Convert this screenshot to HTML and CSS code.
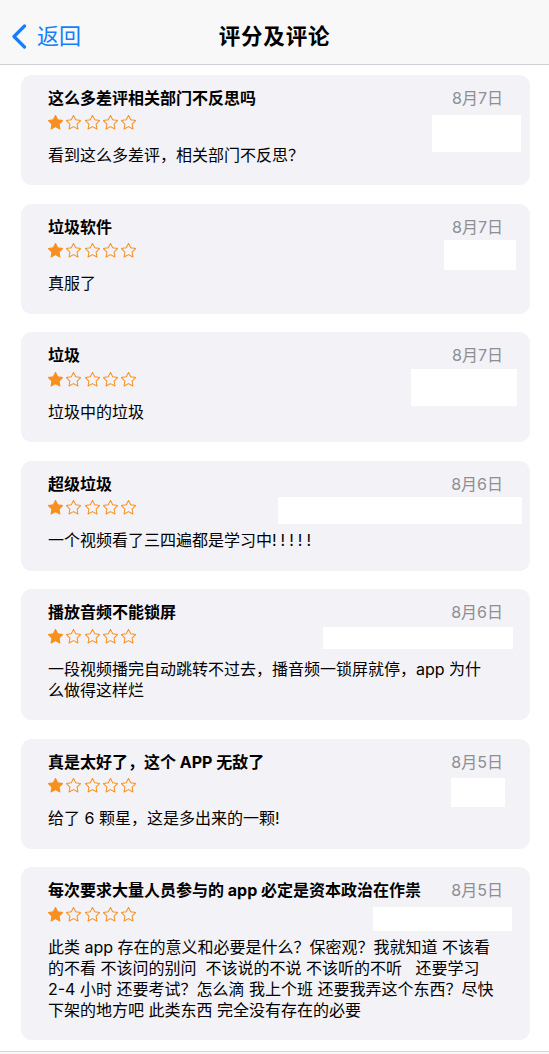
FILE: index.html
```html
<!DOCTYPE html>
<html lang="zh-CN">
<head>
<meta charset="utf-8">
<title>评分及评论</title>
<link rel="stylesheet" href="styles.css">
</head>
<body>
<header class="nav">
  <a class="back" href="#">
    <svg class="chev" width="16" height="25" viewBox="0 0 16 25"><path d="M13.5 2 L3 12.5 L13.5 23" fill="none" stroke="#147efb" stroke-width="3.2" stroke-linecap="round" stroke-linejoin="round"/></svg>
    <span>返回</span>
  </a>
  <h1 class="nav-title">评分及评论</h1>
  <span class="nav-spacer"></span>
</header>

<main class="list">
  <section class="card">
    <div class="head"><h2 class="title">这么多差评相关部门不反思吗</h2><span class="date">8月7日</span></div>
    <div class="stars"><svg class="star on" viewBox="1.6 1.3 20.8 20.8"><path d="M12 1.8l3.05 6.2 6.85 1-4.95 4.83 1.17 6.82L12 17.43l-6.12 3.22 1.17-6.82L2.1 9l6.85-1z"/></svg><svg class="star" viewBox="1.6 1.3 20.8 20.8"><path d="M12 1.8l3.05 6.2 6.85 1-4.95 4.83 1.17 6.82L12 17.43l-6.12 3.22 1.17-6.82L2.1 9l6.85-1z"/></svg><svg class="star" viewBox="1.6 1.3 20.8 20.8"><path d="M12 1.8l3.05 6.2 6.85 1-4.95 4.83 1.17 6.82L12 17.43l-6.12 3.22 1.17-6.82L2.1 9l6.85-1z"/></svg><svg class="star" viewBox="1.6 1.3 20.8 20.8"><path d="M12 1.8l3.05 6.2 6.85 1-4.95 4.83 1.17 6.82L12 17.43l-6.12 3.22 1.17-6.82L2.1 9l6.85-1z"/></svg><svg class="star" viewBox="1.6 1.3 20.8 20.8"><path d="M12 1.8l3.05 6.2 6.85 1-4.95 4.83 1.17 6.82L12 17.43l-6.12 3.22 1.17-6.82L2.1 9l6.85-1z"/></svg></div>
    <p class="body">看到这么多差评，相关部门不反思？</p>
    <span class="mask m1"></span>
  </section>

  <section class="card">
    <div class="head"><h2 class="title">垃圾软件</h2><span class="date">8月7日</span></div>
    <div class="stars"><svg class="star on" viewBox="1.6 1.3 20.8 20.8"><path d="M12 1.8l3.05 6.2 6.85 1-4.95 4.83 1.17 6.82L12 17.43l-6.12 3.22 1.17-6.82L2.1 9l6.85-1z"/></svg><svg class="star" viewBox="1.6 1.3 20.8 20.8"><path d="M12 1.8l3.05 6.2 6.85 1-4.95 4.83 1.17 6.82L12 17.43l-6.12 3.22 1.17-6.82L2.1 9l6.85-1z"/></svg><svg class="star" viewBox="1.6 1.3 20.8 20.8"><path d="M12 1.8l3.05 6.2 6.85 1-4.95 4.83 1.17 6.82L12 17.43l-6.12 3.22 1.17-6.82L2.1 9l6.85-1z"/></svg><svg class="star" viewBox="1.6 1.3 20.8 20.8"><path d="M12 1.8l3.05 6.2 6.85 1-4.95 4.83 1.17 6.82L12 17.43l-6.12 3.22 1.17-6.82L2.1 9l6.85-1z"/></svg><svg class="star" viewBox="1.6 1.3 20.8 20.8"><path d="M12 1.8l3.05 6.2 6.85 1-4.95 4.83 1.17 6.82L12 17.43l-6.12 3.22 1.17-6.82L2.1 9l6.85-1z"/></svg></div>
    <p class="body">真服了</p>
    <span class="mask m2"></span>
  </section>

  <section class="card">
    <div class="head"><h2 class="title">垃圾</h2><span class="date">8月7日</span></div>
    <div class="stars"><svg class="star on" viewBox="1.6 1.3 20.8 20.8"><path d="M12 1.8l3.05 6.2 6.85 1-4.95 4.83 1.17 6.82L12 17.43l-6.12 3.22 1.17-6.82L2.1 9l6.85-1z"/></svg><svg class="star" viewBox="1.6 1.3 20.8 20.8"><path d="M12 1.8l3.05 6.2 6.85 1-4.95 4.83 1.17 6.82L12 17.43l-6.12 3.22 1.17-6.82L2.1 9l6.85-1z"/></svg><svg class="star" viewBox="1.6 1.3 20.8 20.8"><path d="M12 1.8l3.05 6.2 6.85 1-4.95 4.83 1.17 6.82L12 17.43l-6.12 3.22 1.17-6.82L2.1 9l6.85-1z"/></svg><svg class="star" viewBox="1.6 1.3 20.8 20.8"><path d="M12 1.8l3.05 6.2 6.85 1-4.95 4.83 1.17 6.82L12 17.43l-6.12 3.22 1.17-6.82L2.1 9l6.85-1z"/></svg><svg class="star" viewBox="1.6 1.3 20.8 20.8"><path d="M12 1.8l3.05 6.2 6.85 1-4.95 4.83 1.17 6.82L12 17.43l-6.12 3.22 1.17-6.82L2.1 9l6.85-1z"/></svg></div>
    <p class="body">垃圾中的垃圾</p>
    <span class="mask m3"></span>
  </section>

  <section class="card">
    <div class="head"><h2 class="title">超级垃圾</h2><span class="date">8月6日</span></div>
    <div class="stars"><svg class="star on" viewBox="1.6 1.3 20.8 20.8"><path d="M12 1.8l3.05 6.2 6.85 1-4.95 4.83 1.17 6.82L12 17.43l-6.12 3.22 1.17-6.82L2.1 9l6.85-1z"/></svg><svg class="star" viewBox="1.6 1.3 20.8 20.8"><path d="M12 1.8l3.05 6.2 6.85 1-4.95 4.83 1.17 6.82L12 17.43l-6.12 3.22 1.17-6.82L2.1 9l6.85-1z"/></svg><svg class="star" viewBox="1.6 1.3 20.8 20.8"><path d="M12 1.8l3.05 6.2 6.85 1-4.95 4.83 1.17 6.82L12 17.43l-6.12 3.22 1.17-6.82L2.1 9l6.85-1z"/></svg><svg class="star" viewBox="1.6 1.3 20.8 20.8"><path d="M12 1.8l3.05 6.2 6.85 1-4.95 4.83 1.17 6.82L12 17.43l-6.12 3.22 1.17-6.82L2.1 9l6.85-1z"/></svg><svg class="star" viewBox="1.6 1.3 20.8 20.8"><path d="M12 1.8l3.05 6.2 6.85 1-4.95 4.83 1.17 6.82L12 17.43l-6.12 3.22 1.17-6.82L2.1 9l6.85-1z"/></svg></div>
    <p class="body">一个视频看了三四遍都是学习中<span class="bang">!!!!!</span></p>
    <span class="mask m4"></span>
  </section>

  <section class="card">
    <div class="head"><h2 class="title">播放音频不能锁屏</h2><span class="date">8月6日</span></div>
    <div class="stars"><svg class="star on" viewBox="1.6 1.3 20.8 20.8"><path d="M12 1.8l3.05 6.2 6.85 1-4.95 4.83 1.17 6.82L12 17.43l-6.12 3.22 1.17-6.82L2.1 9l6.85-1z"/></svg><svg class="star" viewBox="1.6 1.3 20.8 20.8"><path d="M12 1.8l3.05 6.2 6.85 1-4.95 4.83 1.17 6.82L12 17.43l-6.12 3.22 1.17-6.82L2.1 9l6.85-1z"/></svg><svg class="star" viewBox="1.6 1.3 20.8 20.8"><path d="M12 1.8l3.05 6.2 6.85 1-4.95 4.83 1.17 6.82L12 17.43l-6.12 3.22 1.17-6.82L2.1 9l6.85-1z"/></svg><svg class="star" viewBox="1.6 1.3 20.8 20.8"><path d="M12 1.8l3.05 6.2 6.85 1-4.95 4.83 1.17 6.82L12 17.43l-6.12 3.22 1.17-6.82L2.1 9l6.85-1z"/></svg><svg class="star" viewBox="1.6 1.3 20.8 20.8"><path d="M12 1.8l3.05 6.2 6.85 1-4.95 4.83 1.17 6.82L12 17.43l-6.12 3.22 1.17-6.82L2.1 9l6.85-1z"/></svg></div>
    <p class="body">一段视频播完自动跳转不过去，播音频一锁屏就停，app 为什<br>么做得这样烂</p>
    <span class="mask m5"></span>
  </section>

  <section class="card">
    <div class="head"><h2 class="title">真是太好了，这个 APP 无敌了</h2><span class="date">8月5日</span></div>
    <div class="stars"><svg class="star on" viewBox="1.6 1.3 20.8 20.8"><path d="M12 1.8l3.05 6.2 6.85 1-4.95 4.83 1.17 6.82L12 17.43l-6.12 3.22 1.17-6.82L2.1 9l6.85-1z"/></svg><svg class="star" viewBox="1.6 1.3 20.8 20.8"><path d="M12 1.8l3.05 6.2 6.85 1-4.95 4.83 1.17 6.82L12 17.43l-6.12 3.22 1.17-6.82L2.1 9l6.85-1z"/></svg><svg class="star" viewBox="1.6 1.3 20.8 20.8"><path d="M12 1.8l3.05 6.2 6.85 1-4.95 4.83 1.17 6.82L12 17.43l-6.12 3.22 1.17-6.82L2.1 9l6.85-1z"/></svg><svg class="star" viewBox="1.6 1.3 20.8 20.8"><path d="M12 1.8l3.05 6.2 6.85 1-4.95 4.83 1.17 6.82L12 17.43l-6.12 3.22 1.17-6.82L2.1 9l6.85-1z"/></svg><svg class="star" viewBox="1.6 1.3 20.8 20.8"><path d="M12 1.8l3.05 6.2 6.85 1-4.95 4.83 1.17 6.82L12 17.43l-6.12 3.22 1.17-6.82L2.1 9l6.85-1z"/></svg></div>
    <p class="body">给了 6 颗星，这是多出来的一颗!</p>
    <span class="mask m6"></span>
  </section>

  <section class="card">
    <div class="head"><h2 class="title">每次要求大量人员参与的 app 必定是资本政治在作祟</h2><span class="date">8月5日</span></div>
    <div class="stars"><svg class="star on" viewBox="1.6 1.3 20.8 20.8"><path d="M12 1.8l3.05 6.2 6.85 1-4.95 4.83 1.17 6.82L12 17.43l-6.12 3.22 1.17-6.82L2.1 9l6.85-1z"/></svg><svg class="star" viewBox="1.6 1.3 20.8 20.8"><path d="M12 1.8l3.05 6.2 6.85 1-4.95 4.83 1.17 6.82L12 17.43l-6.12 3.22 1.17-6.82L2.1 9l6.85-1z"/></svg><svg class="star" viewBox="1.6 1.3 20.8 20.8"><path d="M12 1.8l3.05 6.2 6.85 1-4.95 4.83 1.17 6.82L12 17.43l-6.12 3.22 1.17-6.82L2.1 9l6.85-1z"/></svg><svg class="star" viewBox="1.6 1.3 20.8 20.8"><path d="M12 1.8l3.05 6.2 6.85 1-4.95 4.83 1.17 6.82L12 17.43l-6.12 3.22 1.17-6.82L2.1 9l6.85-1z"/></svg><svg class="star" viewBox="1.6 1.3 20.8 20.8"><path d="M12 1.8l3.05 6.2 6.85 1-4.95 4.83 1.17 6.82L12 17.43l-6.12 3.22 1.17-6.82L2.1 9l6.85-1z"/></svg></div>
    <p class="body pre">此类 app 存在的意义和必要是什么？保密观？我就知道 不该看<br>的不看 不该问的别问  不该说的不说 不该听的不听   还要学习<br>2-4 小时 还要考试？怎么滴 我上个班 还要我弄这个东西？尽快<br>下架的地方吧 此类东西 完全没有存在的必要</p>
    <span class="mask m7"></span>
  </section>
</main>

<footer class="tabbar"></footer>
</body>
</html>
```

FILE: styles.css
```css
* { box-sizing: border-box; }

html, body {
  margin: 0;
  padding: 0;
  background: #ffffff;
}

body {
  font-family: "Inter", "Noto Sans CJK SC", sans-serif;
  color: #000;
  width: 549px;
  height: 1054px;
  overflow: hidden;
}

.nav {
  height: 65px;
  padding-top: 8px;
  background: #f8f8f9;
  border-bottom: 1px solid #cfcfd3;
  display: grid;
  grid-template-columns: 1fr auto 1fr;
  align-items: center;
}

.back {
  display: flex;
  align-items: center;
  gap: 10px;
  padding-left: 11px;
  color: #147efb;
  text-decoration: none;
  font-size: 22px;
  line-height: 26px;
}

.chev { display: block; }

.nav-title {
  margin: 0;
  font-size: 21.5px;
  font-weight: 700;
  line-height: 26px;
  letter-spacing: 0.8px;
}

.list {
  padding: 10px 19px 10.5px 21px;
  display: flex;
  flex-direction: column;
  gap: 18.5px;
}

.card {
  position: relative;
  background: #f2f2f7;
  border-radius: 11px;
  padding: 13px 27px 19.5px 27px;
}

.head {
  display: flex;
  justify-content: space-between;
  align-items: baseline;
  gap: 12px;
}

.title {
  margin: 0;
  font-size: 16px;
  font-weight: 700;
  line-height: 20px;
}

.date {
  font-size: 16px;
  line-height: 20px;
  color: #8e8e93;
  font-weight: 400;
  white-space: nowrap;
}

.stars {
  display: flex;
  gap: 3.3px;
  margin-top: 6.5px;
  height: 15px;
}

.star {
  width: 15px;
  height: 15px;
  fill: none;
  stroke: #f7901e;
  stroke-width: 1.4;
  stroke-linejoin: round;
}

.star.on {
  fill: #f7901e;
}

.body {
  margin: 15px 0 0 0;
  font-size: 16px;
  line-height: 21px;
}

.pre { white-space: pre-wrap; }

.bang { letter-spacing: 4px; }

.mask {
  position: absolute;
  background: #ffffff;
}

.m1 { left: 411px; top: 39.5px; width: 89px; height: 37.5px; }
.m2 { left: 423px; top: 36.5px; width: 72px; height: 30px; }
.m3 { left: 390px; top: 37px; width: 106px; height: 37px; }
.m4 { left: 257px; top: 36px; width: 244px; height: 27px; }
.m5 { left: 302px; top: 37.5px; width: 190px; height: 22.5px; }
.m6 { left: 430px; top: 39px; width: 54px; height: 29px; }
.m7 { left: 352px; top: 39.5px; width: 139px; height: 24.5px; }

.tabbar {
  height: 4px;
  background: #f8f8f9;
  border-top: 1px solid #d6d6da;
}
```
